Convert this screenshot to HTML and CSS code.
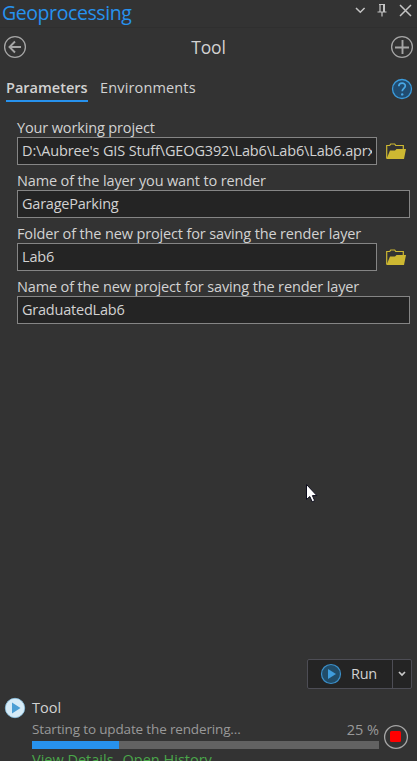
FILE: index.html
```html
<!DOCTYPE html>
<html lang="en">
<head>
<meta charset="utf-8">
<title>Geoprocessing</title>
<link rel="stylesheet" href="styles.css">
</head>
<body>
<main class="pane">
  <header class="titlebar">
    <h1 class="pane-title">Geoprocessing</h1>
    <svg class="window-icons" width="62" height="24" viewBox="0 0 62 24" fill="none" stroke="#c4c4c4" stroke-width="1.5">
      <path d="M2 8l4.300 4.300L10.600 8"/>
      <path d="M25 4.500h6M26 4.500v7.500M23.500 12h9M28 12v4.500" stroke-width="1.200"/><path d="M30 4v8" stroke-width="2"/>
      <path d="M46 5l11 11M57 5L46 16"/>
    </svg>
  </header>
  <div class="toolbar">
    <svg width="24" height="24" viewBox="0 0 24 24" fill="none" stroke="#a6a6a6"><circle cx="12" cy="12" r="10.400" stroke-width="1.300"/><path d="M18 12H7M12 6.500L6.500 12l5.500 5.500" stroke-width="1.900"/></svg>
    <h2 class="tool-name">Tool</h2>
    <svg class="add" width="24" height="24" viewBox="0 0 24 24" fill="none" stroke="#a6a6a6"><circle cx="12" cy="12" r="10.400" stroke-width="1.300"/><path d="M5 12.500h14M12.500 5v14" stroke-width="1.900"/></svg>
  </div>
  <nav class="tabs">
    <span class="tab active">Parameters</span>
    <span class="tab environments">Environments</span>
    <svg class="help" width="22" height="22" viewBox="0 0 22 22"><circle cx="11" cy="11" r="9.500" fill="#214c70" stroke="#3b9bdc" stroke-width="1.300"/><path d="M7.800 8.300C7.900 4 14.500 4.300 14.300 8c-.1 2.200-3.100 2.600-3.100 5.300" fill="none" stroke="#49a8e6" stroke-width="1.700"/><circle cx="11.200" cy="16.400" r="1.200" fill="#49a8e6"/></svg>
  </nav>
  <section class="form">
    <div class="field"><div class="label">Your working project</div>
      <div class="row"><div class="input"><span>D:\Aubree's GIS Stuff\GEOG392\Lab6\Lab6\Lab6.aprx</span></div>
      <svg class="folder" width="20" height="17" viewBox="0 0 20 17"><path d="M.7 15.500V2.500h3l1-1.500h4l1 1.500h7.600V6" fill="none" stroke="#cdb832" stroke-width="1.200"/><path d="M.5 16L4 7.500h5L10.500 6H20l-2 10z" fill="#cdb832"/></svg></div></div>
    <div class="field"><div class="label">Name of the layer you want to render</div>
      <div class="row"><div class="input name"><span>GarageParking</span></div></div></div>
    <div class="field"><div class="label">Folder of the new project for saving the render layer</div>
      <div class="row"><div class="input"><span>Lab6</span></div>
      <svg class="folder" width="20" height="17" viewBox="0 0 20 17"><path d="M.7 15.500V2.500h3l1-1.500h4l1 1.500h7.600V6" fill="none" stroke="#cdb832" stroke-width="1.200"/><path d="M.5 16L4 7.500h5L10.500 6H20l-2 10z" fill="#cdb832"/></svg></div></div>
    <div class="field"><div class="label">Name of the new project for saving the render layer</div>
      <div class="row"><div class="input name"><span>GraduatedLab6</span></div></div></div>
  </section>
  <div class="actions">
    <div class="run">
      <div class="run-main"><svg width="22" height="22" viewBox="0 0 22 22"><circle cx="11" cy="11" r="9.500" fill="#214c68" stroke="#3b8fc9" stroke-width="1.200"/><path d="M8 6l8 5-8 5z" fill="#3f9ddd"/></svg><span class="run-label">Run</span></div>
      <div class="run-more"><svg width="8" height="6" viewBox="0 0 8 6" fill="none" stroke="#c8c8c8" stroke-width="1.700"><path d="M1 1l3 3 3-3"/></svg></div>
    </div>
  </div>
  <footer class="status">
    <svg class="status-icon" width="22" height="22" viewBox="0 0 22 22"><circle cx="11" cy="11" r="9.700" fill="#d6ebf7" stroke="#8dc6e8" stroke-width=".8"/><path d="M8 5.500l8.500 5.500L8 16.500z" fill="#4b9ed4"/></svg>
    <div class="status-body">
      <div class="status-tool">Tool</div>
      <div class="message"><span class="msg-text">Starting to update the rendering...</span><span class="percent">25 %</span></div>
      <div class="progress"><div class="bar" style="width:25%"></div></div>
      <div class="links"><span class="details">View Details</span><span class="history">Open History</span></div>
    </div>
    <svg class="stop" width="26" height="26" viewBox="0 0 26 26"><circle cx="13" cy="13" r="11.400" fill="none" stroke="#a6a6a6" stroke-width="1.300"/><rect x="7" y="7" width="11" height="11" rx="1.500" fill="#f00"/></svg>
  </footer>
  <svg class="cursor" width="14" height="22" viewBox="0 0 14 22"><path d="M1.500 1.500v15l3.300-3 2.400 5.300 2.500-1.100L7.400 12.600h4.500z" fill="#fff" stroke="#0c0c1c"/></svg>
</main>
</body>
</html>
```
FILE: styles.css
```css
* { box-sizing: border-box; }
body { margin: 0; background: #333; }
.pane {
  position: relative;
  display: flex;
  flex-direction: column;
  width: 417px;
  height: 761px;
  overflow: hidden;
  background: #333;
  color: #d2d2d2;
  font: 14.500px/20px "Open Sans", "Noto Sans", sans-serif;
  white-space: nowrap;
}
.pane > * { flex: none; }
svg { display: block; flex: none; }
h1, h2 { margin: 0; font-weight: 400; }
.titlebar { display: flex; justify-content: space-between; height: 28px; border-bottom: 1px solid #2f2f2f; padding-left: 2px; }
.pane-title { color: #2792ee; font-size: 19.500px; line-height: 25px; letter-spacing: -0.420px; }
.window-icons { margin-right: 1px; }
.toolbar { display: grid; grid-template-columns: 24px 1fr 24px; align-items: center; height: 38px; padding: 0 3px; }
.tool-name { text-align: center; font-size: 17.500px; line-height: 24px; letter-spacing: -0.200px; }
.add { margin-top: -1px; }
.tabs { display: flex; height: 52px; padding: 12px 4px 0 6px; gap: 12px; }
.tab { height: 24px; line-height: 20px; }
.active { border-bottom: 2px solid #2792ee; font-weight: 600; width: 82px; }
.environments { letter-spacing: 0.150px; }
.help { margin: 0 0 0 auto; }
.form { padding: 0 7px 0 17px; }
.field { height: 53px; }
.label { height: 19px; line-height: 20px; letter-spacing: -0.140px; }
.row { display: flex; align-items: center; }
.input { flex: 1; min-width: 0; height: 28px; padding: 0 4px; border: 1px solid #858585; background: #242424; line-height: 26px; letter-spacing: -0.140px; }
.name { letter-spacing: -0.220px; }
.input span { display: block; overflow: hidden; }
.folder { margin: 0 4px 0 9px; }
.actions { display: flex; justify-content: flex-end; margin-top: 329px; padding-right: 5px; }
.run { display: flex; width: 105px; height: 30px; border: 1px solid #4d4d55; border-radius: 2px; background: #242424; }
.run-main { display: flex; align-items: center; width: 85px; padding-left: 12px; gap: 9px; border-right: 1px solid #4d4d55; }
.run-label { letter-spacing: -0.300px; }
.run-more { display: flex; flex: 1; align-items: center; justify-content: center; }
.status { display: flex; margin-top: 8px; padding-left: 4px; }
.status-icon { margin: 0 6px 0 0; }
.status-body { width: 347px; }
.status-tool { height: 22px; line-height: 21px; }
.message { display: flex; justify-content: space-between; height: 22px; color: #999; line-height: 21px; }
.msg-text { font-size: 13.500px; letter-spacing: -0.150px; }
.progress { height: 8px; background: #626262; }
.bar { height: 8px; background: #2792ee; }
.links { display: flex; gap: 9px; color: #4aa64a; line-height: 21px; }
.stop { margin: 27px 0 0 4px; }
.cursor { position: absolute; left: 305px; top: 483px; }
```
